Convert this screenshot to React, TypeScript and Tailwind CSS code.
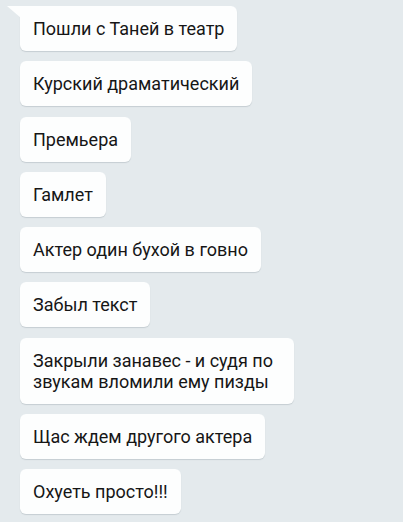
import React from "react";

// Incoming messages, top to bottom
const messages = [
  "Пошли с Таней в театр",
  "Курский драматический",
  "Премьера",
  "Гамлет",
  "Актер один бухой в говно",
  "Забыл текст",
  "Закрыли занавес - и судя по звукам вломили ему пизды",
  "Щас ждем другого актера",
  "Охуеть просто!!!",
];

function Bubble({ text, first }: { text: string; first?: boolean }) {
  return (
    <div
      className={`relative w-fit max-w-[274px] bg-[#fdfefe] px-[13px] py-[12px] text-[18px] leading-[21px] text-[#161616] shadow-[0_1px_1px_rgba(60,80,90,0.18)] rounded-[6px] ${
        first ? "rounded-tl-none" : ""
      }`}
    >
      {/* tail of the first bubble in a group */}
      {first && (
        <svg
          className="absolute -left-[13px] top-0"
          width="14"
          height="12"
          viewBox="0 0 14 12"
        >
          <path d="M0 0 H14 V12 Z" fill="#fdfefe" />
        </svg>
      )}
      {text}
    </div>
  );
}

export default function App() {
  return (
    <div
      className="min-h-[522px] w-[403px] bg-[#e4eaed] pt-[6px] pl-[20px]"
      style={{ fontFamily: "Roboto, 'Noto Sans', sans-serif" }}
    >
      <div className="flex flex-col items-start gap-[10.25px]">
        {messages.map((m, i) => (
          <Bubble key={i} text={m} first={i === 0} />
        ))}
      </div>
    </div>
  );
}
